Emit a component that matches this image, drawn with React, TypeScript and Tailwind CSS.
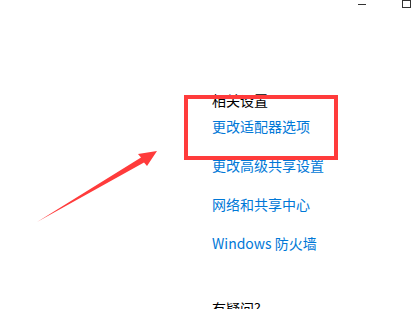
import React from 'react'

const links = ['更改适配器选项', '更改高级共享设置', '网络和共享中心', 'Windows 防火墙']

export default function App() {
  return (
    <div
      className="relative w-[413px] h-[309px] overflow-hidden bg-white text-[14px]"
      style={{ fontFamily: '"Noto Sans CJK SC", "Noto Sans", sans-serif' }}
    >
      {/* 窗口按钮 */}
      <div className="flex items-start justify-end h-[9px]">
        <div className="mt-[4px] w-[8px] h-px bg-[#333]" />
        <div className="ml-[36px] mr-[2px] w-[9px] h-[8px] border border-[#333]" />
      </div>

      {/* 相关设置 */}
      <div className="pl-[212px] pt-[81px]">
        <h3 className="leading-[20px] text-black">相关设置</h3>
        <ul className="mt-[6px] flex flex-col gap-[19px]">
          {links.map((l) => (
            <li key={l} className="leading-[20px] text-[#0078d7]">
              {l}
            </li>
          ))}
        </ul>
        <h3 className="mt-[45px] leading-[20px] text-black">有疑问?</h3>
      </div>

      {/* 标注 */}
      <div className="absolute left-[184px] top-[95px] w-[154px] h-[65px] border-4 border-[#ff3b3b]" />
      <svg className="absolute left-0 top-0" width="413" height="309" viewBox="0 0 413 309">
        <polygon
          points="37,222 141,157.4 138,154 157,151 147,166 144,162.6"
          fill="#ff3b3b"
        />
      </svg>
    </div>
  )
}
